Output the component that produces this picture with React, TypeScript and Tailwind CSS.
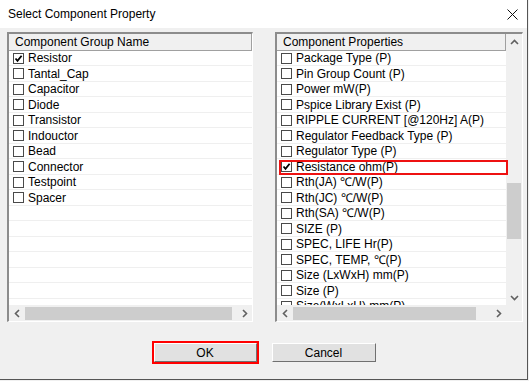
import React from "react";

const groups = [
  { label: "Resistor", checked: true },
  { label: "Tantal_Cap" },
  { label: "Capacitor" },
  { label: "Diode" },
  { label: "Transistor" },
  { label: "Indouctor" },
  { label: "Bead" },
  { label: "Connector" },
  { label: "Testpoint" },
  { label: "Spacer" },
  { label: "", empty: true },
  { label: "", empty: true },
  { label: "", empty: true },
  { label: "", empty: true },
  { label: "", empty: true },
  { label: "", empty: true },
  { label: "", empty: true },
];

const props = [
  { label: "Package Type (P)" },
  { label: "Pin Group Count (P)" },
  { label: "Power mW(P)" },
  { label: "Pspice Library Exist (P)" },
  { label: "RIPPLE CURRENT [@120Hz] A(P)" },
  { label: "Regulator Feedback Type (P)" },
  { label: "Regulator Type (P)" },
  { label: "Resistance ohm(P)", checked: true },
  { label: "Rth(JA) ℃/W(P)" },
  { label: "Rth(JC) ℃/W(P)" },
  { label: "Rth(SA) ℃/W(P)" },
  { label: "SIZE (P)" },
  { label: "SPEC, LIFE Hr(P)" },
  { label: "SPEC, TEMP, ℃(P)" },
  { label: "Size (LxWxH) mm(P)" },
  { label: "Size (P)" },
  { label: "Size(WxLxH) mm(P)" },
];

type Item = { label: string; checked?: boolean; empty?: boolean };

function CheckBox({ checked }: { checked?: boolean }) {
  return (
    <div className="w-[11px] h-[11px] border border-[#4a4a4a] bg-white flex items-center justify-center shrink-0">
      {checked && (
        <svg width="9" height="9" viewBox="0 0 9 9">
          <path d="M1.5 4.5 L3.5 6.8 L7.6 1.8" fill="none" stroke="#000" strokeWidth="1.8" />
        </svg>
      )}
    </div>
  );
}

function Chevron({ dir }: { dir: "up" | "down" | "left" | "right" }) {
  const d = {
    up: "M1 6 L4.5 2.5 L8 6",
    down: "M1 3 L4.5 6.5 L8 3",
    left: "M6 1 L2.5 4.5 L6 8",
    right: "M3 1 L6.5 4.5 L3 8",
  }[dir];
  return (
    <svg width="9" height="9" viewBox="0 0 9 9">
      <path d={d} fill="none" stroke="#606060" strokeWidth="1.6" />
    </svg>
  );
}

function Rows({ items }: { items: Item[] }) {
  return (
    <div className="flex-1 overflow-hidden bg-white">
      {items.map((it, i) => (
        <div
          key={i}
          className={`${i % 2 === 0 ? "h-[15px]" : "h-[16px]"} flex items-center pl-[4px] border-b border-[#efefef]`}
        >
          {!it.empty && <CheckBox checked={it.checked} />}
          {!it.empty && <span className="ml-[4px] whitespace-nowrap leading-none">{it.label}</span>}
        </div>
      ))}
    </div>
  );
}

function HScroll({ thumbWidth }: { thumbWidth: string }) {
  return (
    <div className="h-[16px] bg-[#f0f0f0] flex items-center">
      <div className="w-[16px] h-[16px] flex items-center justify-center">
        <Chevron dir="left" />
      </div>
      <div className="flex-1 h-[16px] flex items-center">
        <div className={`${thumbWidth} h-[13px] bg-[#cdcdcd]`} />
      </div>
      <div className="w-[16px] h-[16px] flex items-center justify-center">
        <Chevron dir="right" />
      </div>
    </div>
  );
}

export default function App() {
  return (
    <div className="w-[529px] h-[381px] bg-[#f0f0f0] font-['Liberation_Sans',Arial,sans-serif] text-[12px] text-black">
      <div className="w-[528px] h-[380px] border-r border-b border-[#555555] flex flex-col relative">
        {/* Title bar */}
        <div className="h-[28px] bg-white flex items-center justify-between pl-[8px] pr-[9px]">
          <span className="text-[12px]">Select Component Property</span>
          <svg width="11" height="11" viewBox="0 0 11 11">
            <path d="M0.5 0.5 L10.5 10.5 M10.5 0.5 L0.5 10.5" stroke="#111" strokeWidth="1" />
          </svg>
        </div>

        {/* Body */}
        <div className="flex-1 bg-[#f0f0f0] pt-[4px] pl-[7px]">
          <div className="flex gap-[22px]">
            {/* Left list */}
            <div className="w-[246px] h-[290px] border-t-2 border-l-2 border-[#8c8c8c] border-r border-b border-r-white border-b-white flex flex-col bg-white">
              <div className="h-[17px] bg-[#f0f0f0] border-b border-r border-[#a0a0a0] pl-[6px] flex items-center leading-none">
                Component Group Name
              </div>
              <Rows items={groups} />
              <HScroll thumbWidth="w-[207px]" />
            </div>

            {/* Right list */}
            <div className="w-[248px] h-[290px] border-t-2 border-l-2 border-[#8c8c8c] border-r border-b border-r-white border-b-white flex flex-col bg-white">
              <div className="flex-1 flex overflow-hidden">
                <div className="flex-1 flex flex-col overflow-hidden">
                  <div className="h-[17px] bg-[#f0f0f0] border-b border-r border-[#a0a0a0] pl-[6px] flex items-center leading-none">
                    Component Properties
                  </div>
                  <Rows items={props} />
                </div>
                <div className="w-[16px] bg-[#f0f0f0] flex flex-col items-center">
                  <div className="h-[17px] flex items-center justify-center">
                    <Chevron dir="up" />
                  </div>
                  <div className="flex-1 w-full flex flex-col items-center pt-[132px]">
                    <div className="w-[14px] h-[56px] bg-[#cdcdcd]" />
                  </div>
                  <div className="h-[16px] flex items-center justify-center">
                    <Chevron dir="down" />
                  </div>
                </div>
              </div>
              <div className="flex">
                <div className="flex-1">
                  <HScroll thumbWidth="w-[183px]" />
                </div>
                <div className="w-[16px] h-[16px] bg-[#f0f0f0]" />
              </div>
            </div>
          </div>

          {/* Buttons */}
          <div className="flex justify-center items-center gap-[13px] mt-[19px] pr-[7px]">
            <div className="border-2 border-[#ff0000]">
              <button className="w-[103px] h-[19px] bg-[#e1e1e1] border border-t-white border-l-white border-r-[#707070] border-b-[#707070] flex items-center justify-center leading-none">
                OK
              </button>
            </div>
            <button className="w-[104px] h-[19px] bg-[#e1e1e1] border border-t-white border-l-white border-r-[#707070] border-b-[#707070] flex items-center justify-center leading-none">
              Cancel
            </button>
          </div>
        </div>

        {/* Highlight overlay on the selected property */}
        <div className="absolute left-[279px] top-[160px] w-[229px] h-[15px] border-2 border-[#ee1111] pointer-events-none" />
      </div>
    </div>
  );
}
